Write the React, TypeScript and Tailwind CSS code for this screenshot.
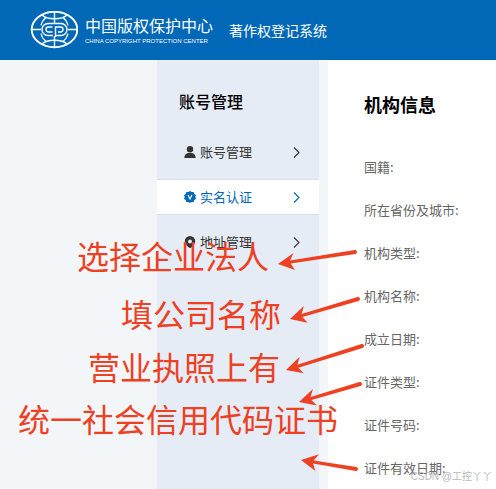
import type { ReactNode } from 'react';

const FIELDS = ['国籍', '所在省份及城市', '机构类型', '机构名称', '成立日期', '证件类型', '证件号码', '证件有效日期'];

// tail -> tip of every hand-drawn arrow
const ARROWS = [
  { from: [355, 252], to: [278, 264] },
  { from: [358, 299], to: [290, 319] },
  { from: [362, 346], to: [286, 370] },
  { from: [360, 384], to: [299, 402] },
  { from: [356, 469], to: [301, 460] },
];

function Emblem() {
  return (
    <svg viewBox="0 0 48 38" className="h-[38px] w-12 shrink-0" fill="none" stroke="#fff" aria-hidden="true">
      <ellipse cx="24.500" cy="18.500" rx="22.800" ry="17.700" strokeWidth="1.900" />
      <path d="M12 4C17 9 32 9 37 4M12 33C17 28 32 28 37 33" strokeWidth="1.400" />
      <path d="M24.500 1v11M24.500 25v11M2 18.500h9M38 18.500h9" strokeWidth="1.400" />
      <path d="M16 6.500C13 9 11.500 12 11 14.500M33 6.500c3 2.500 4.500 5.500 5 8M16 30.500c-3-2.500-4.500-5.500-5-8M33 30.500c3-2.500 4.500-5.500 5-8" strokeWidth="1.200" />
      <path d="M24.500 12.500H18a6 6 0 0 0 0 12h5M22.500 16H18.500a2.500 2.500 0 0 0 0 5h4" strokeWidth="1.400" />
      <path d="M24.500 12.500H31a6 6 0 0 1 0 12h-5M25.500 26V16h5a2.500 2.500 0 0 1 0 5h-2.500" strokeWidth="1.400" />
    </svg>
  );
}

function UserIcon() {
  return (
    <svg viewBox="0 0 12 12" className="size-3" fill="currentColor" aria-hidden="true">
      <circle cx="6" cy="3.200" r="3.200" />
      <path d="M.3 12c0-3 1.900-4.900 3.900-5.100h3.600c2 .2 3.900 2.100 3.900 5.100z" />
    </svg>
  );
}

function BadgeIcon() {
  return (
    <svg viewBox="0 0 12 12" className="size-3" aria-hidden="true">
      <path fill="currentColor" d="M6 0l1.700 1.100 2-.1.600 1.900L12 4.200 11.300 6l.7 1.900-1.700 1.200L9.700 11l-2-.1L6 12l-1.700-1.100-2 .1-.6-1.900L0 7.900.7 6 0 4.200l1.700-1.300L2.300 1l2 .1z" />
      <path d="M4 4l2 4 2-4" fill="none" stroke="#fff" strokeWidth="1.100" />
    </svg>
  );
}

function PinIcon() {
  return (
    <svg viewBox="0 0 12 12" className="size-3" aria-hidden="true">
      <path fill="currentColor" fillRule="evenodd" d="M6 0a5.200 5.200 0 0 1 5.200 5.200C11.200 8.400 8.300 10.500 6 12.200 3.700 10.500.8 8.400.8 5.200A5.200 5.200 0 0 1 6 0zm0 3.400a2 2 0 1 0 0 4 2 2 0 0 0 0-4z" />
    </svg>
  );
}

function MenuItem({ icon, label, active = false }: { icon: ReactNode; label: string; active?: boolean }) {
  return (
    <a
      href="#"
      aria-current={active ? 'page' : undefined}
      className={`flex h-9 items-center border-y pl-[27px] pr-[18px] text-[13px] leading-5 ${
        active ? 'border-[#d9e0ea] bg-white text-[#0068b7]' : 'border-transparent text-[#333]'
      }`}
    >
      {icon}
      <span className="ml-1 flex-1">{label}</span>
      <svg viewBox="0 0 8 12" className="h-3 w-2" fill="none" stroke="currentColor" strokeWidth="1.100" aria-hidden="true">
        <path d="M1 1.500L6 6.500 1 11.500" />
      </svg>
    </a>
  );
}

function Arrow({ from, to }: { from: number[]; to: number[] }) {
  const dx = from[0] - to[0];
  const dy = from[1] - to[1];
  const len = Math.hypot(dx, dy);
  const angle = (Math.atan2(dy, dx) * 180) / Math.PI;
  return (
    <g transform={`translate(${to[0]} ${to[1]}) rotate(${angle})`}>
      <path d={`M0 0L17-8.500 12.500-1.500L${len}-2A2 2 0 0 1 ${len} 2L12.500 1.500 16 8.500z`} />
    </g>
  );
}

function Annotations() {
  return (
    <div className="pointer-events-none absolute inset-0 text-[32px] leading-10 whitespace-nowrap text-[#ee4023]">
      <p className="absolute left-[77px] top-[235px]">选择企业法人</p>
      <p className="absolute left-[121px] top-[293px]">填公司名称</p>
      <p className="absolute left-[88px] top-[346px]">营业执照上有</p>
      <p className="absolute left-[18px] top-[398px]">统一社会信用代码证书</p>
      <svg width="496" height="489" className="absolute left-0 top-0" fill="currentColor" aria-hidden="true">
        {ARROWS.map((a) => (
          <Arrow key={a.to.join()} from={a.from} to={a.to} />
        ))}
      </svg>
    </div>
  );
}

export default function App() {
  return (
    <div className="relative flex min-h-screen flex-col overflow-hidden bg-[#f2f6f9] font-['Noto_Sans_CJK_SC',sans-serif]">
      <header className="flex h-[60px] items-center bg-[#0068b7] pl-[30px] text-white">
        <Emblem />
        <div className="ml-[7px] shrink-0">
          <div className="text-[16px] leading-5">中国版权保护中心</div>
          <div className="mt-0.5 font-['Liberation_Sans',sans-serif] text-[6px] leading-2">CHINA COPYRIGHT PROTECTION CENTER</div>
        </div>
        <h1 className="ml-4 text-[14px] leading-5">著作权登记系统</h1>
      </header>

      <div className="flex flex-1 pl-[157px]">
        <aside className="w-[162px] shrink-0 bg-[#e6ecf6] pt-[29px]">
          <h2 className="pl-[22px] text-[16px] font-medium leading-6 text-black">账号管理</h2>
          <nav className="mt-[21px] flex flex-col gap-[9px]">
            <MenuItem icon={<UserIcon />} label="账号管理" />
            <MenuItem icon={<BadgeIcon />} label="实名认证" active />
            <MenuItem icon={<PinIcon />} label="地址管理" />
          </nav>
        </aside>

        <main className="ml-[9px] flex-1 bg-white pl-9 pt-8">
          <h2 className="text-[18px] font-bold leading-6 text-black">机构信息</h2>
          <ul className="mt-[29px] text-[13px] text-[#666]">
            {FIELDS.map((name) => (
              <li key={name} className="flex h-[43px] items-center whitespace-nowrap">
                {name}:
              </li>
            ))}
          </ul>
        </main>
      </div>

      <Annotations />
      <div className="absolute bottom-0.5 right-1 text-[10px] leading-5 text-[#b8b8b8] font-['Liberation_Sans','Noto_Sans_CJK_SC',sans-serif]">CSDN @工控丫丫</div>
    </div>
  );
}
